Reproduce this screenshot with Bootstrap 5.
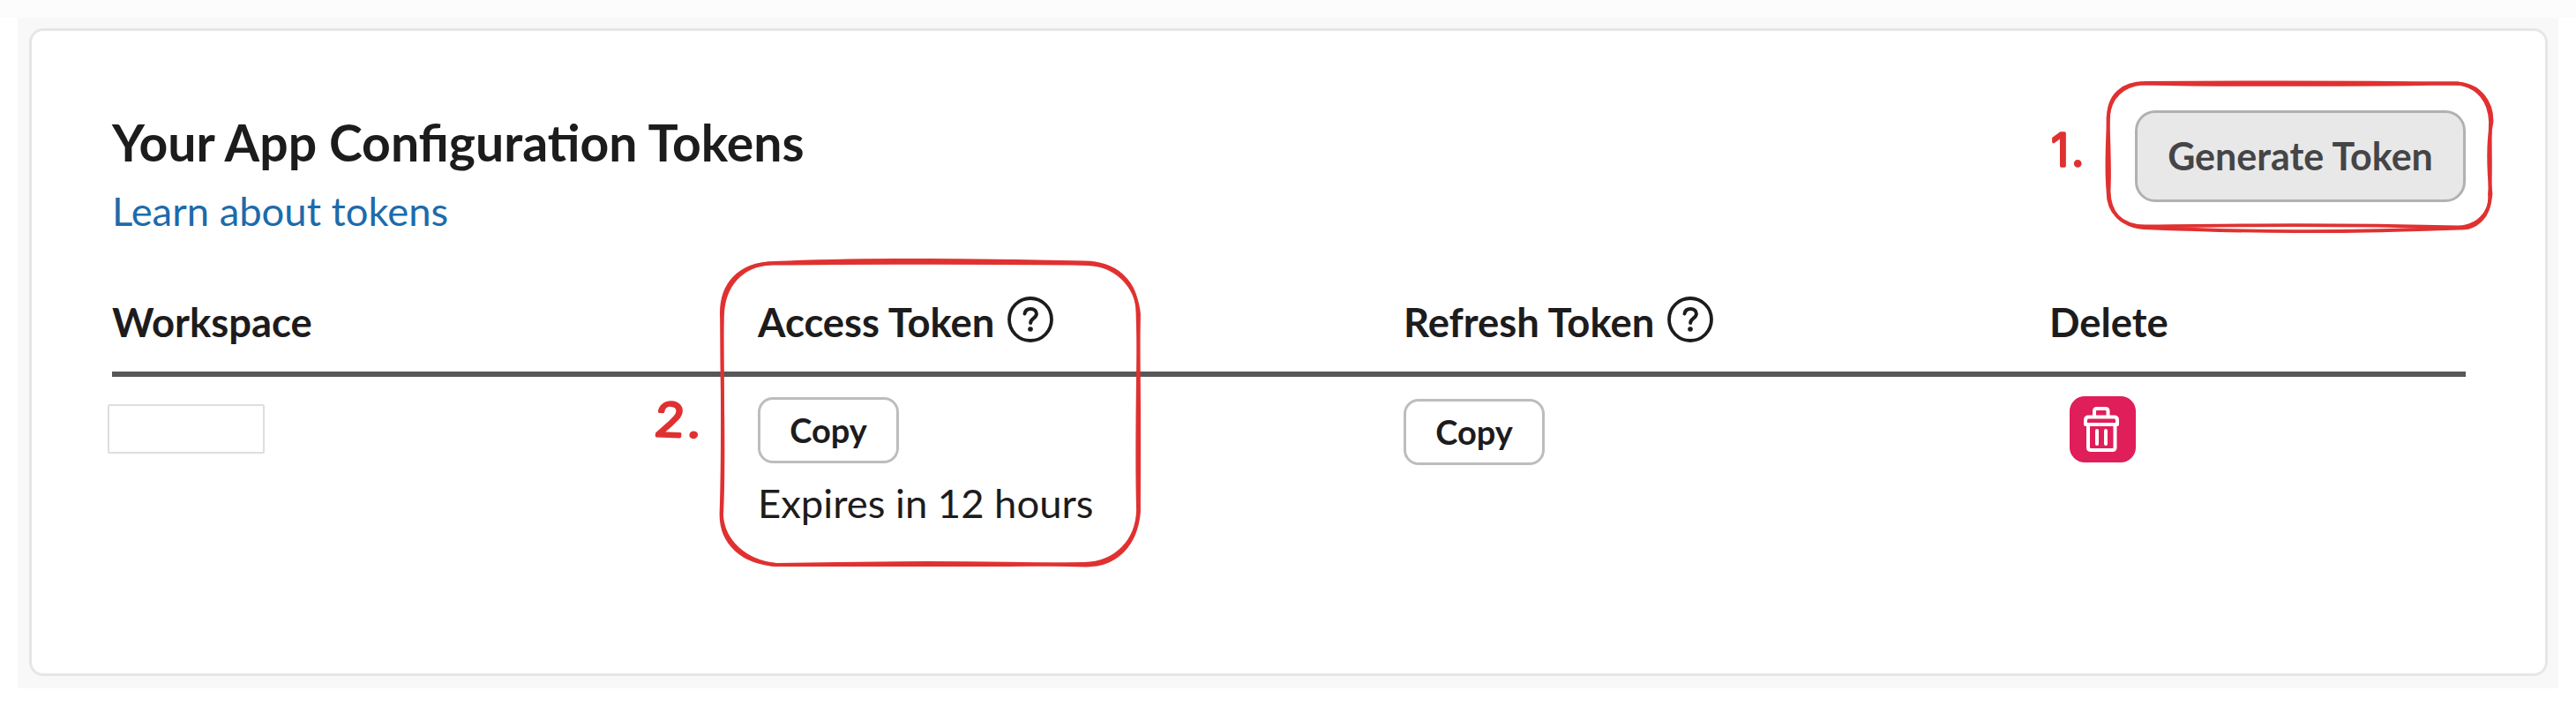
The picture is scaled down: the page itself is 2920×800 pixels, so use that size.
<!DOCTYPE html>
<html lang="en">
<head>
<meta charset="utf-8">
<title>Your App Configuration Tokens</title>
<link href="https://cdn.jsdelivr.net/npm/bootstrap@5.3.0/dist/css/bootstrap.min.css" rel="stylesheet">
<style>
body{font-family:Lato,sans-serif;color:#1d1c1d;background:linear-gradient(#fcfcfc 20px,#fff 20px);width:2920px;height:800px;overflow:hidden}
.backdrop{margin:20px 20px 0;height:760px;padding:12px 12px 14px 13px;background:#f8f8f8}
.token-card{height:734px;border:3px solid #e6e6e6;border-radius:16px;padding:91px 90px 0 91px}
.page-title{font-size:57.1px;line-height:70px;font-weight:700;margin-bottom:15px}
.learn{font-size:45.4px;line-height:56px;color:#1d6bab;display:block}
.btn-generate{width:375px;height:104px;margin-top:-1px;border:3px solid #b1b1b1;border-radius:23px;background:#e8e8e8;color:#454547;font-size:43px;font-weight:700;line-height:1.2;padding:0}
.token-grid{display:grid;grid-template-columns:732px 732px 732px 472px}
.grid-head{margin-top:70px;height:90px;border-bottom:6px solid #585858;font-size:45.4px;font-weight:700;line-height:56px}
.help-icon{margin:-1px 0 0 15px}
.grid-line{font-size:45.4px;line-height:56px}
.btn-copy{width:160px;height:75px;border:3px solid #bdbdbd;border-radius:17px;background:#fff;color:#1d1c1d;font-size:38px;font-weight:700;line-height:1.2;padding:0}
.copy-access{margin:23px 0 17px}
.copy-refresh{margin-top:25px}
.ws-name{width:178px;height:56px;border:2px solid #dedede;border-radius:2px;margin:31px 0 0 -5px}
.btn-trash{width:75px;height:75px;border:0;border-radius:17px;background:#e01e5a;padding:0;margin:22px 0 0 23px}
.notes{left:0;top:0;pointer-events:none}
.notes text{font-family:Inter,sans-serif;font-weight:300;fill:#e03131;stroke:#e03131;stroke-width:3.4;stroke-linejoin:round;letter-spacing:3px}
</style>
</head>
<body class="position-relative">
<main class="backdrop">
  <section class="card token-card">
    <header class="d-flex justify-content-between align-items-start">
      <div>
        <h1 class="page-title">Your App Configuration Tokens</h1>
        <a class="learn text-decoration-none" href="#">Learn about tokens</a>
      </div>
      <button class="btn btn-generate">Generate Token</button>
    </header>
    <div class="token-grid grid-head">
      <div>Workspace</div>
      <div class="d-flex">Access Token
        <svg class="help-icon" width="52" height="52" viewBox="0 0 52 52" fill="none" stroke="#1d1c1d"><circle cx="26" cy="26" r="24" stroke-width="3.8"/><path d="M19.500 19.500c.6-3.800 3.200-5.500 6.700-5.500 4 0 6.700 2.200 6.700 5.500 0 5.300-6.700 5-6.700 10.500" stroke-width="4" stroke-linecap="round"/><circle cx="26" cy="37" r="2.800" fill="#1d1c1d" stroke="none"/></svg>
      </div>
      <div class="d-flex">Refresh Token
        <svg class="help-icon" width="52" height="52" viewBox="0 0 52 52" fill="none" stroke="#1d1c1d"><circle cx="26" cy="26" r="24" stroke-width="3.8"/><path d="M19.500 19.500c.6-3.800 3.200-5.500 6.700-5.500 4 0 6.700 2.200 6.700 5.500 0 5.300-6.700 5-6.700 10.500" stroke-width="4" stroke-linecap="round"/><circle cx="26" cy="37" r="2.800" fill="#1d1c1d" stroke="none"/></svg>
      </div>
      <div>Delete</div>
    </div>
    <div class="token-grid grid-line">
      <div><div class="ws-name"></div></div>
      <div class="d-flex flex-column align-items-start">
        <button class="btn btn-copy copy-access">Copy</button>
        <div>Expires in 12 hours</div>
      </div>
      <div class="d-flex align-items-start"><button class="btn btn-copy copy-refresh">Copy</button></div>
      <div class="d-flex align-items-start">
        <button class="btn btn-trash d-flex" aria-label="Delete">
          <svg width="75" height="75" viewBox="0 0 75 75" fill="none" stroke="#fff" stroke-width="4" stroke-linejoin="round" stroke-linecap="round"><path d="M28 22v-5q0-3 3-3h9.500q3 0 3 3v5M18 32v-5q0-3.500 3.500-3.500h29q3.500 0 3.500 3.500v5zM21 32v26q0 3 3 3h24.500q3 0 3-3V32M31 39v15M41 39v15"/></svg>
        </button>
      </div>
    </div>
  </section>
</main>
<svg class="notes position-absolute" width="2920" height="800" viewBox="0 0 2920 800">
  <g fill="none" stroke="#e03131" stroke-width="3.800" stroke-linecap="round">
    <path d="M2431 94C2550 93 2660 93 2784 94.500C2811 95 2825 116 2824.500 138C2819 165 2821 195 2823.500 220C2822 243 2808 257 2786 257.500C2650 254 2550 255 2431 256.500C2404 256 2389 240 2389.500 216C2387 190 2389 160 2390 133C2390 108 2406 94 2431 94"/>
    <path d="M2428 94.500C2540 97 2670 96 2786 94.500C2809 98 2822 114 2823 138C2822 165 2824 195 2822 220C2824 244 2807 260 2788 258.500C2650 264 2550 263 2430 258C2405 256 2391 242 2390.500 216C2392 190 2390 160 2389.500 133C2392 110 2404 97 2428 94.500"/>
    <path d="M877 298C990 293 1110 295 1229 297.500C1266 298 1289 320 1289.500 355C1292 430 1291 510 1291 580C1288 616 1266 641 1231 640.500C1110 637 990 637.500 881 640C842 638 817 616 817.500 582C820 510 819 430 818 360C816 322 838 299 877 298"/>
    <path d="M874 298.500C990 298 1110 297 1233 299C1264 300 1288 322 1291 356C1290 430 1288 510 1290 578C1289 612 1266 638 1229 639C1110 641 990 640 879 640C845 636 820 614 818 584C822 510 817 430 819 357C820 324 840 300 874 298.500"/>
  </g>
  <text font-size="51" x="2325" y="187.500">1.</text>
  <text font-size="52" transform="translate(746 494) skewX(-4) rotate(2) translate(-6 0) scale(1.09 1)">2.</text>
</svg>
<script src="https://cdn.jsdelivr.net/npm/bootstrap@5.3.0/dist/js/bootstrap.bundle.min.js"></script>
</body>
</html>
